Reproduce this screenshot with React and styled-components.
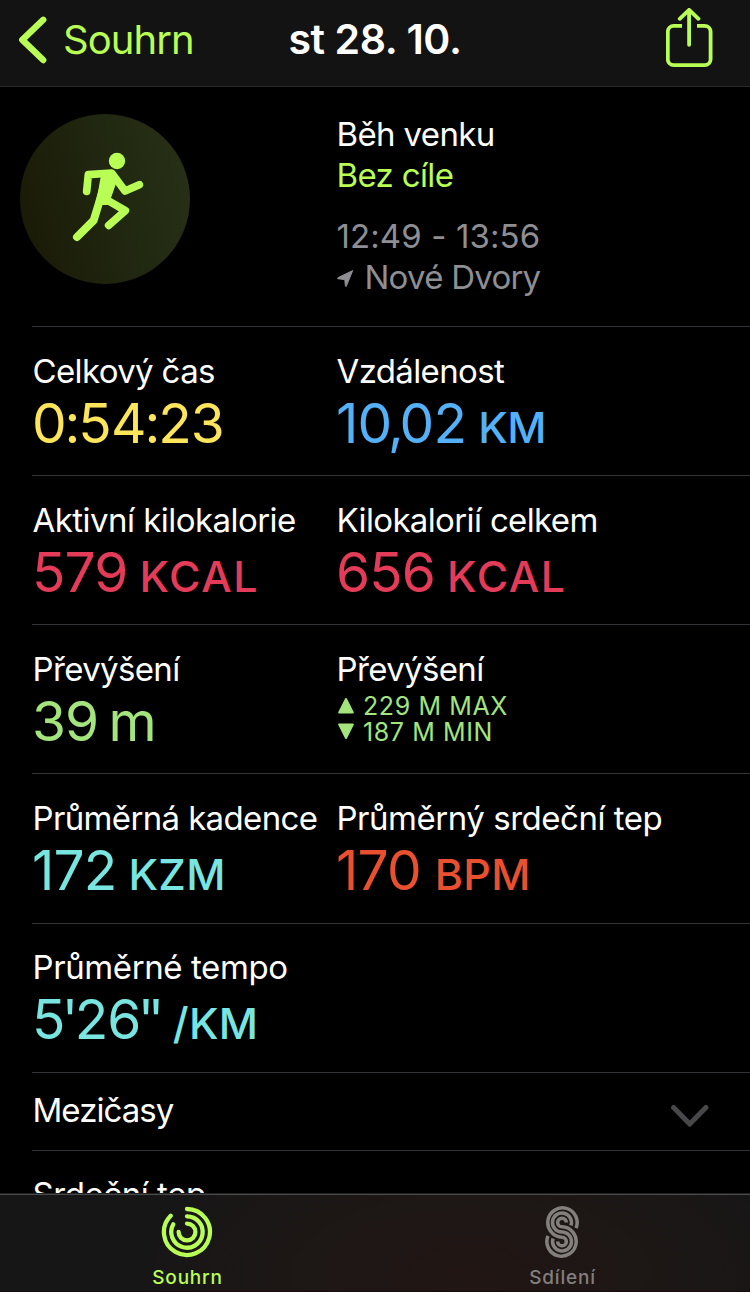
import React from 'react'
import styled, {createGlobalStyle} from 'styled-components'

const GlobalStyle=createGlobalStyle`
    *{ box-sizing: border-box; }
    body{
        margin: 0;
        background: #000;
        font-family: Inter, "Liberation Sans", sans-serif;
        color: #fff;
    }
    svg{ display: block; flex-shrink: 0; }
`;

const lime='#b9fe55'

const Screen=styled.div`
    width: 750px;
    height: 1292px;
    display: flex;
    flex-direction: column;
    overflow: hidden;
    background: #000;
`;

const NavBar=styled.header`
    flex: none;
    height: 87px;
    padding: 0 37px 0 19px;
    display: grid;
    grid-template-columns: 1fr auto 1fr;
    align-items: start;
    background: #131313;
    border-bottom: 1px solid #2a2a2a;
`;

const BackButton=styled.button`
    display: flex;
    align-items: center;
    gap: 16px;
    height: 79px;
    padding: 0;
    border: 0;
    background: none;
    color: ${lime};
    font: 400 40px Inter, sans-serif;
    letter-spacing: -0.95px;
`;

const NavTitle=styled.h1`
    margin: 0;
    font-size: 41px;
    font-weight: 600;
    line-height: 79px;
    letter-spacing: -0.4px;
    white-space: nowrap;
    padding-left: 18px;
`;

const ShareButton=styled.button`
    justify-self: end;
    padding: 8px 0 0;
    border: 0;
    background: none;
`;

const Content=styled.main`
    flex: 1;
    min-height: 0;
    overflow: hidden;
`;

const Row=styled.section`
    display: grid;
    grid-template-columns: 304px 1fr;
    height: ${p=>p.$height || 149}px;
    margin-left: 32px;
    padding-top: ${p=>p.$top || 24}px;
    border-bottom: 1px solid #343436;
`;

const Badge=styled.div`
    width: 170px;
    height: 170px;
    margin-left: -12px;
    border-radius: 50%;
    background: linear-gradient(75deg, #1a1a06 5%, #20260f 50%, #283218 100%);
`;

const Info=styled.div`
    display: flex;
    flex-direction: column;
`;

const Line=styled.p`
    display: flex;
    align-items: center;
    margin: ${p=>p.$gap || 0}px 0 0;
    padding-left: 0.5px;
    color: ${p=>p.$color || '#fff'};
    font-size: 33px;
    line-height: 41px;
    letter-spacing: ${p=>p.$spacing ?? -0.64}px;
    white-space: nowrap;
`;

const Value=styled.p`
    margin: 1px 0 0;
    color: ${p=>p.$color};
    font-size: 55px;
    line-height: 60px;
    letter-spacing: -0.85px;
    white-space: nowrap;
`;

const Mark=styled.span`
    margin: 0 ${p=>p.$tight}px;
`;

const Unit=styled.span`
    margin-left: ${p=>p.$gap || 12}px;
    font-size: ${p=>p.$size || 43}px;
    font-weight: ${p=>p.$size ? 400 : 500};
    line-height: 1;
    letter-spacing: ${p=>p.$spacing || 0}px;
`;

const Ranges=styled.div`
    padding-top: 3px;
`;

const Range=styled.p`
    display: flex;
    align-items: center;
    gap: 9px;
    margin: 0;
    padding-left: 2px;
    color: #a3e47c;
    font-size: 25px;
    line-height: 26px;
    letter-spacing: 0.6px;
    white-space: nowrap;
    svg{ margin-bottom: 1px; }
`;

const Disclosure=styled.button`
    display: flex;
    justify-content: space-between;
    align-items: flex-start;
    width: 718px;
    height: 78px;
    margin-left: 32px;
    padding: 17px 41px 0 0;
    border: 0;
    border-bottom: 1px solid #343436;
    background: none;
    font-family: inherit;
    text-align: left;
`;

const ChevronBox=styled.span`
    padding-top: 15px;
`;

const NextSection=styled.section`
    margin-left: 32px;
    padding-top: 23px;
`;

const TabBar=styled.nav`
    flex: none;
    display: grid;
    grid-template-columns: 1fr 1fr;
    height: 98px;
    border-top: 1px solid #4a4a4a;
    border-bottom: 1px solid #180a0e;
    box-shadow: 0 -1px #222;
    background: radial-gradient(ellipse 330px 150px at 470px 80px, #211614 0%, #1d1715 50%, #171616 100%);
`;

const Tab=styled.button`
    display: flex;
    flex-direction: column;
    align-items: center;
    gap: 7px;
    padding: 11px 0 0;
    border: 0;
    background: none;
    color: ${p=>p.$active ? lime : '#837f7d'};
    font: 500 19px/26px Inter, sans-serif;
    letter-spacing: 0.8px;
    svg{ margin-right: 2px; }
`;

const BackIcon=()=>(
    <svg width="28" height="48" viewBox="19 16 28 48" fill="none" stroke={lime} strokeWidth="6.4" strokeLinecap="round" strokeLinejoin="round">
        <path d="M43.2 19.8 22.300 39.900l20.900 20.100"/>
    </svg>
)

const ShareIcon=()=>(
    <svg width="47" height="60" viewBox="666 8 47 60" fill="none" stroke={lime} strokeWidth="3.8" strokeLinejoin="round">
        <path d="M682 25.8h-8.2a6 6 0 0 0-6 6v27.4a6 6 0 0 0 6 6h30.8a6 6 0 0 0 6-6V31.800a6 6 0 0 0-6-6H697"/>
        <path strokeLinecap="round" d="M689.1 10v34.800M679.700 18.800l9.400-9 9.400 9"/>
    </svg>
)

const RunnerIcon=()=>(
    <svg width="170" height="170" viewBox="60 342 510 510" fill="none" stroke={lime} strokeWidth="23" strokeLinecap="round" strokeLinejoin="round">
        <circle cx="351" cy="483" r="24.500" fill={lime} stroke="none"/>
        <path d="M260 574l5-50 70-5 40 54 43-19"/>
        <path fill={lime} stroke="none" d="M302 530l36-17 12 32-16 46-11 24-18 0-18 2z"/>
        <path strokeWidth="24" d="M311 560l-15 52-15 49-50 50"/>
        <path d="M316 597l60 35-50 44"/>
    </svg>
)

const LocationIcon=()=>(
    <svg width="28" height="19" viewBox="337.500 268 28 19" fill="#8e8e93" stroke="#8e8e93" strokeWidth="1" strokeLinejoin="round">
        <path d="M353.200 270.600L346.800 286.200Q346.200 287 345.900 286L345.300 279.600L338.200 278.700Q337.500 278.200 338.400 277.700z"/>
    </svg>
)

const Triangle=({down})=>(
    <svg width="16" height="17" viewBox="0 0 16 17" fill="#a3e47c" stroke="#a3e47c" strokeWidth="2" strokeLinejoin="round">
        <path d={down ? 'M1.200 1.500h13.600L8 15z' : 'M1.200 15.500h13.600L8 2z'}/>
    </svg>
)

const ChevronDown=()=>(
    <svg width="38" height="23" viewBox="671 1105 38 23" fill="none" stroke="#48484a" strokeWidth="5" strokeLinecap="round" strokeLinejoin="round">
        <path d="M673.600 1107.500l16.100 16.600 16.200-16.600"/>
    </svg>
)

const RingsIcon=()=>(
    <svg width="52" height="52" viewBox="-26 -26 52 52" fill="none" stroke={lime} strokeWidth="4.300" strokeLinecap="round">
        <path d="M0-23A23 23 0 1 1-16.300-16.300"/>
        <path d="M0-15.700A15.700 15.700 0 1 1-13.700-7.700"/>
        <path d="M0-8.400A8.400 8.400 0 1 1-8.400 0"/>
    </svg>
)

const SharingIcon=()=>(
    <svg width="34" height="52" viewBox="510 407.500 102 156" fill="none" stroke="#837f7d" strokeWidth="10.600" strokeLinecap="butt">
        <path d="M603 474A44 44 0 1 0 561 501A13 13 0 1 1 548 514"/>
        <path d="M588 466A28.500 28.500 0 1 0 561 485.500A28.500 28.500 0 1 1 534 505"/>
        <path d="M574 457A13 13 0 1 0 561 470A44 44 0 1 1 519 497"/>
    </svg>
)

const stats=[
    [
        {label:'Celkový čas',value:'0:54:23',color:'#fde55b'},
        {label:'Vzdálenost',value:'10,02',unit:'KM',unitSpacing:-0.5,color:'#54b0f7'},
    ],
    [
        {label:'Aktivní kilokalorie',labelSpacing:-0.54,value:'579',unit:'KCAL',unitSpacing:1.5,color:'#e43b58'},
        {label:'Kilokalorií celkem',value:'656',unit:'KCAL',unitSpacing:1.5,color:'#e43b58'},
    ],
    [
        {label:'Převýšení',value:'39',unit:'m',unitSize:55,gap:10,color:'#a3e47c'},
        {label:'Převýšení',range:['229 M MAX','187 M MIN']},
    ],
    [
        {label:'Průměrná kadence',value:'172',unit:'KZM',unitSpacing:0.3,color:'#78e5e1'},
        {label:'Průměrný srdeční tep',labelSpacing:-0.47,value:'170',unit:'BPM',gap:14,unitSpacing:0.3,color:'#e8502f'},
    ],
    [
        {label:'Průměrné tempo',labelSpacing:-0.4,value:"5'26''",unit:'/KM',unitSpacing:0.3,color:'#78e5e1'},
    ],
]

// side margins for the punctuation between digits
const tight={':':-1.25,',':-3.4,"'":-2.8}

const Stat=({item})=>(
    <div>
        <Line $spacing={item.labelSpacing}>{item.label}</Line>
        {item.range
            ? <Ranges>
                {item.range.map((text,i)=>(
                    <Range key={text}><Triangle down={i===1}/>{text}</Range>
                ))}
            </Ranges>
            : <Value $color={item.color}>
                {item.value.split(/([:,'])/).map((part,i)=>(
                    tight[part] ? <Mark key={i} $tight={tight[part]}>{part}</Mark> : part
                ))}
                {item.unit && <Unit $size={item.unitSize} $gap={item.gap} $spacing={item.unitSpacing}>{item.unit}</Unit>}
            </Value>}
    </div>
)

const App=()=>{
    return(
        <Screen>
            <GlobalStyle/>
            <NavBar>
                <BackButton type="button"><BackIcon/>Souhrn</BackButton>
                <NavTitle>st 28. 10.</NavTitle>
                <ShareButton type="button"><ShareIcon/></ShareButton>
            </NavBar>
            <Content>
                <Row $height={240} $top={27}>
                    <Badge><RunnerIcon/></Badge>
                    <Info>
                        <Line>Běh venku</Line>
                        <Line $color={lime}>Bez cíle</Line>
                        <Line $color="#8e8e93" $gap={20} $spacing={0.1}>12:49 - 13:56</Line>
                        <Line $color="#8e8e93" $spacing={-0.75}><LocationIcon/>Nové Dvory</Line>
                    </Info>
                </Row>
                {stats.map((row,i)=>(
                    <Row key={i} $height={i===3 ? 150 : 149} $top={i===4 ? 23 : 24}>
                        {row.map((item,j)=><Stat key={j} item={item}/>)}
                    </Row>
                ))}
                <Disclosure type="button">
                    <Line as="span" $spacing={-0.95}>Mezičasy</Line>
                    <ChevronBox><ChevronDown/></ChevronBox>
                </Disclosure>
                <NextSection><Line $spacing={-0.44}>Srdeční tep</Line></NextSection>
            </Content>
            <TabBar>
                <Tab type="button" $active><RingsIcon/>Souhrn</Tab>
                <Tab type="button"><SharingIcon/>Sdílení</Tab>
            </TabBar>
        </Screen>
    )
}
export default App
